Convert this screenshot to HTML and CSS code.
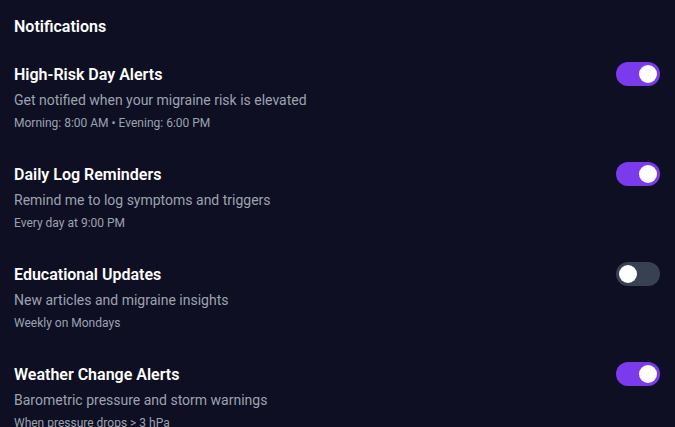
FILE: index.html
```html
<!DOCTYPE html>
<html lang="en">
<head>
<meta charset="utf-8">
<title>Notifications</title>
<link rel="stylesheet" href="styles.css">
</head>
<body>
<main class="page">
  <h2 class="heading">Notifications</h2>
  <ul class="list">
    <li class="item">
      <div class="text">
        <div class="title">High-Risk Day Alerts</div>
        <div class="desc">Get notified when your migraine risk is elevated</div>
        <div class="meta">Morning: 8:00 AM • Evening: 6:00 PM</div>
      </div>
      <span class="toggle on" role="switch" aria-checked="true"><span class="knob"></span></span>
    </li>
    <li class="item">
      <div class="text">
        <div class="title">Daily Log Reminders</div>
        <div class="desc">Remind me to log symptoms and triggers</div>
        <div class="meta">Every day at 9:00 PM</div>
      </div>
      <span class="toggle on" role="switch" aria-checked="true"><span class="knob"></span></span>
    </li>
    <li class="item">
      <div class="text">
        <div class="title">Educational Updates</div>
        <div class="desc">New articles and migraine insights</div>
        <div class="meta">Weekly on Mondays</div>
      </div>
      <span class="toggle" role="switch" aria-checked="false"><span class="knob"></span></span>
    </li>
    <li class="item">
      <div class="text">
        <div class="title">Weather Change Alerts</div>
        <div class="desc">Barometric pressure and storm warnings</div>
        <div class="meta">When pressure drops &gt; 3 hPa</div>
      </div>
      <span class="toggle on" role="switch" aria-checked="true"><span class="knob"></span></span>
    </li>
  </ul>
</main>
</body>
</html>
```

FILE: styles.css
```css
html, body {
  margin: 0;
  padding: 0;
  background: #0e0f23;
  height: 100%;
  overflow: hidden;
}
body {
  font-family: Roboto, "Noto Sans", sans-serif;
  color: #ffffff;
}
.page {
  padding: 15px 15px 0 14px;
}
.heading {
  margin: 0 0 23px 0;
  font-size: 16px;
  line-height: 24px;
  font-weight: 600;
}
.list {
  list-style: none;
  margin: 0;
  padding: 0;
  display: flex;
  flex-direction: column;
  gap: 31px;
}
.item {
  display: flex;
  justify-content: space-between;
  align-items: flex-start;
}
.title {
  font-size: 16px;
  line-height: 24px;
  font-weight: 600;
  padding-top: 1px;
}
.desc {
  margin-top: 3px;
  font-size: 14px;
  line-height: 20px;
  color: #9ca3af;
}
.meta {
  margin-top: 5px;
  font-size: 12px;
  line-height: 16px;
  color: #9ca3af;
}
.toggle {
  flex: none;
  width: 44px;
  height: 24px;
  border-radius: 12px;
  background: #374151;
  display: flex;
  align-items: center;
  padding: 0 3px;
  box-sizing: border-box;
}
.toggle.on {
  background: #7c3aed;
  justify-content: flex-end;
}
.knob {
  width: 18px;
  height: 18px;
  border-radius: 50%;
  background: #ffffff;
}
```
